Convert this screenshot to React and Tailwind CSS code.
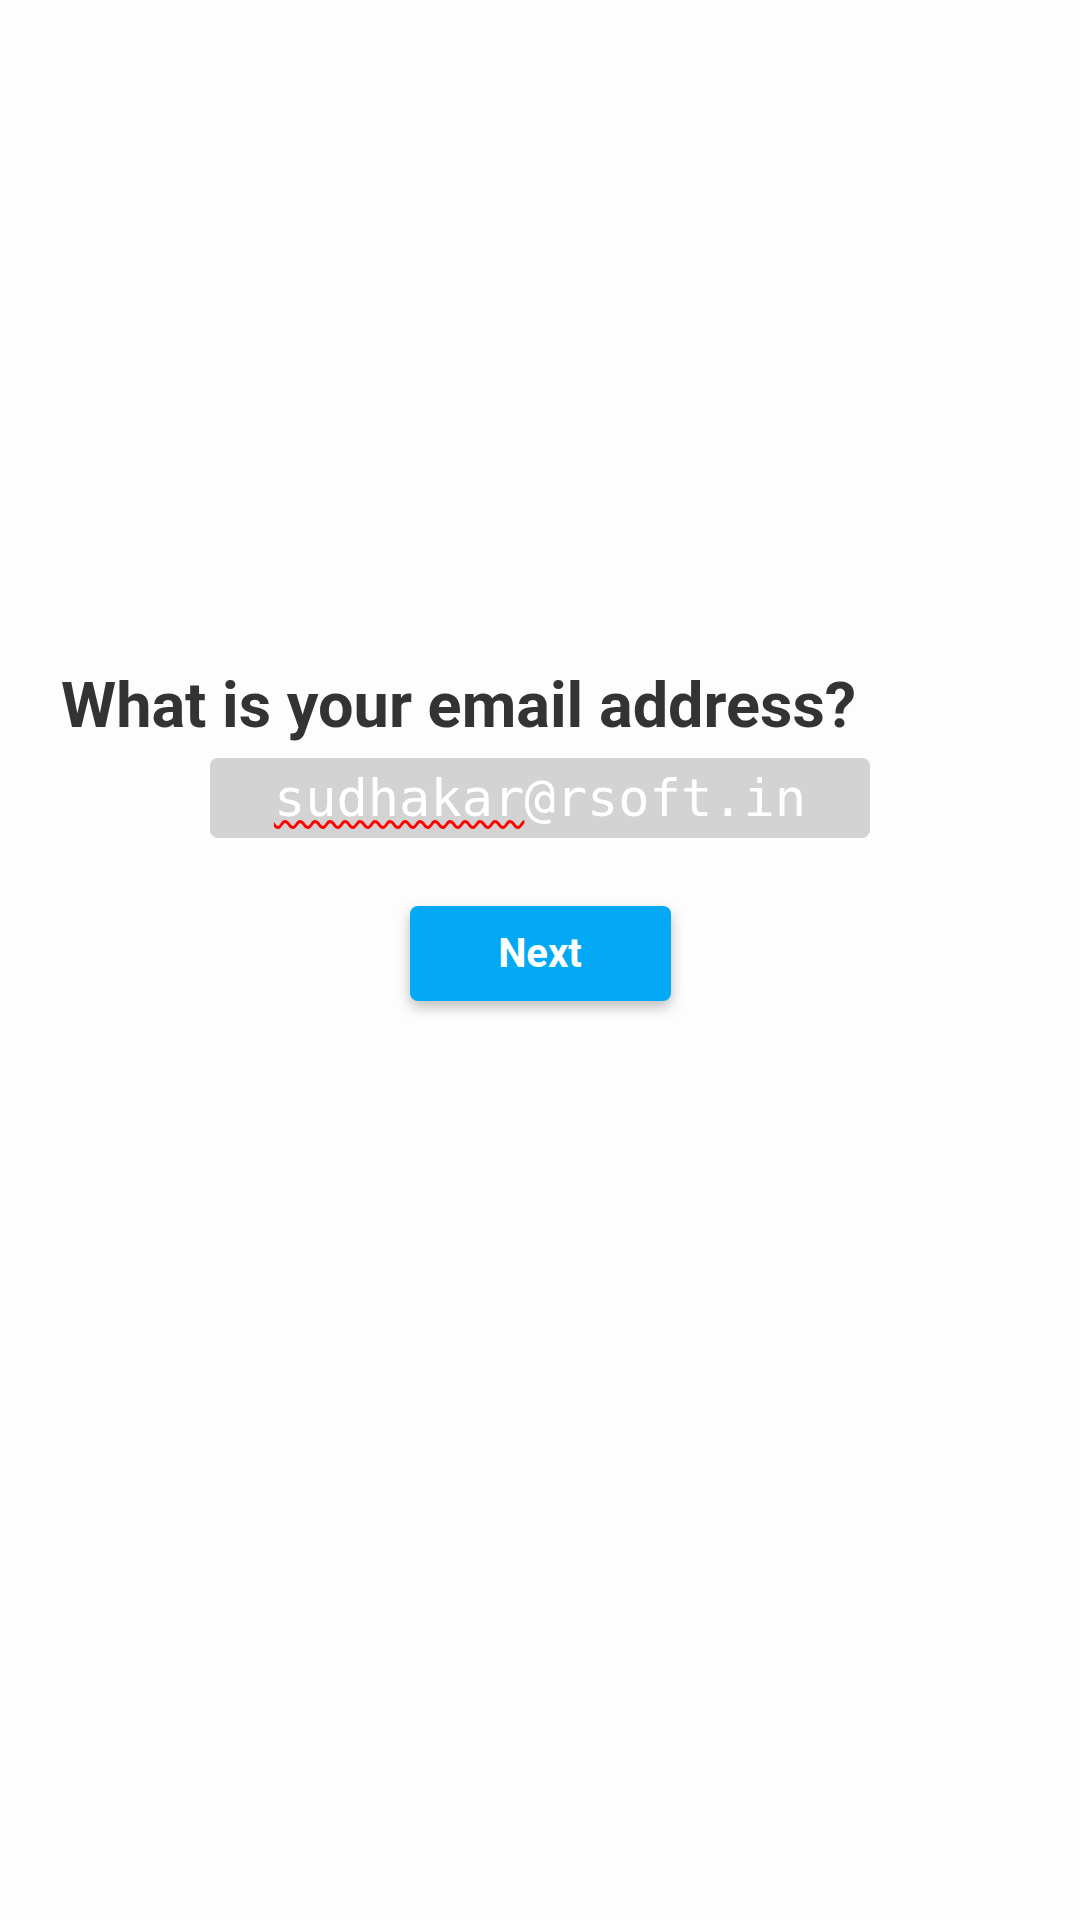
import React from "react";

const App = () => {
    return (
        <div className="min-h-[1920px] w-full bg-[#fdfdfd] pt-[668px] px-[61px]" style={{ fontFamily: "Roboto, 'Liberation Sans', sans-serif" }}>
            {/* question */}
            <h1 className="text-[63px] leading-[76px] font-bold text-[#333333]">What is your email address?</h1>

            {/* email field */}
            <div className="mt-[14px] mx-auto w-[660px] h-[80px] rounded-[8px] bg-[#d3d3d3] flex items-center justify-center">
                <span className="text-[52px] leading-[80px] text-white" style={{ fontFamily: "'DejaVu Sans Mono', monospace" }}>
                    <span className="underline decoration-wavy decoration-[#ff0000] decoration-[3px] underline-offset-[4px]">sudhakar</span>@rsoft.in
                </span>
            </div>

            {/* action */}
            <div className="mt-[68px] flex justify-center">
                <button className="w-[261px] h-[95px] rounded-[8px] bg-[#03a9f4] text-white text-[40px] font-bold shadow-[0_6px_14px_rgba(0,0,0,0.25)]">
                    Next
                </button>
            </div>
        </div>
    );
};

export default App;
